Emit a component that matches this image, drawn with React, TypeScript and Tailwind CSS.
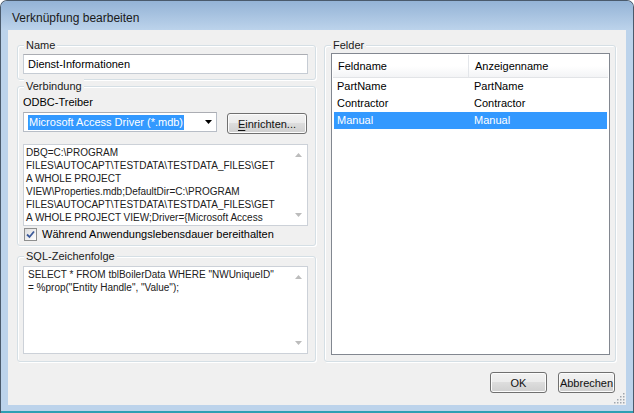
import type { ReactNode } from "react";

const connLines = [
  "DBQ=C:\\PROGRAM",
  "FILES\\AUTOCAPT\\TESTDATA\\TESTDATA_FILES\\GET",
  "A WHOLE PROJECT",
  "VIEW\\Properties.mdb;DefaultDir=C:\\PROGRAM",
  "FILES\\AUTOCAPT\\TESTDATA\\TESTDATA_FILES\\GET",
  "A WHOLE PROJECT VIEW;Driver={Microsoft Access",
];

const sqlLines = [
  'SELECT * FROM tblBoilerData WHERE "NWUniqueID"',
  '= %prop("Entity Handle", "Value");',
];

const rows = [
  { field: "PartName", display: "PartName" },
  { field: "Contractor", display: "Contractor" },
  { field: "Manual", display: "Manual", selected: true },
];

function Group({ label, className, children }: { label: string; className: string; children?: ReactNode }) {
  return (
    <div className={`relative rounded-[3px] border border-[#d5dfe5] shadow-[inset_1px_1px_0_#ffffff,1px_1px_0_#ffffff] ${className}`}>
      <span className="absolute -top-[8px] left-[6px] px-[2px] bg-[#f0f0f0] leading-[14px] text-[#1b1b1b] whitespace-nowrap">
        {label}
      </span>
      {children}
    </div>
  );
}

function Button({ children, className }: { children: ReactNode; className: string }) {
  return (
    <button className={`rounded-[3px] border border-[#707070] bg-[linear-gradient(#f2f2f2_0%,#ebebeb_50%,#dddddd_50%,#cfcfcf_100%)] shadow-[inset_0_0_0_1px_#fcfcfc] leading-[14px] text-[#111] whitespace-nowrap ${className}`}>
      {children}
    </button>
  );
}

function ScrollColumn() {
  return (
    <div className="w-[17px] shrink-0 flex flex-col justify-between items-center py-[8px]">
      <svg width="7" height="4" viewBox="0 0 7 4">
        <path d="M0 4 L3.5 0 L7 4 Z" fill="#bcbcbc" />
      </svg>
      <svg width="7" height="4" viewBox="0 0 7 4">
        <path d="M0 0 L3.5 4 L7 0 Z" fill="#bcbcbc" />
      </svg>
    </div>
  );
}

export default function App() {
  return (
    <div className="w-[634px] h-[413px] flex flex-col overflow-hidden rounded-t-[7px] border-x border-t border-[#4a5a6c] bg-[#bcd3eb] font-['Liberation_Sans',Arial,sans-serif] text-[11px] text-black">
      {/* title bar */}
      <div className="h-[29px] shrink-0 flex items-center pl-[11px] pt-[5px] bg-[linear-gradient(#94b3d6,#bcd3eb)] text-[12px] text-[#1a1a1a]">
        Verknüpfung bearbeiten
      </div>

      {/* client area */}
      <div className="relative flex-1 flex flex-col mx-[7px] bg-[#f0f0f0] pt-[15px] pl-[9px] pr-[10px]">
        <div className="flex gap-[8px] h-[317px]">
          {/* left column */}
          <div className="w-[299px] flex flex-col">
            <Group label="Name" className="h-[35px] pt-[8px] pl-[5px] pr-[7px]">
              <div className="h-[20px] border border-[#c6ccd4] border-t-[#abadb3] bg-white pl-[4px] leading-[18px]">
                Dienst-Informationen
              </div>
            </Group>

            <Group label="Verbindung" className="h-[160px] mt-[6px] pt-[8px] pl-[5px] pr-[7px]">
              <div className="leading-[14px]">ODBC-Treiber</div>
              <div className="flex items-start gap-[10px] mt-[3px]">
                <div className="w-[194px] h-[20px] flex items-center justify-between border border-[#b7bdc6] border-t-[#abadb3] bg-white pl-[4px] pr-[4px]">
                  <span className="bg-[#3399ff] text-white leading-[15px] px-[1px] whitespace-nowrap">
                    Microsoft Access Driver (*.mdb)
                  </span>
                  <svg width="7" height="4" viewBox="0 0 7 4">
                    <path d="M0 0 L3.5 4 L7 0 Z" fill="#000" />
                  </svg>
                </div>
                <Button className="w-[80px] h-[21px] mt-[1px]">
                  <span className="underline underline-offset-2">E</span>inrichten...
                </Button>
              </div>
              <div className="mt-[10px] h-[82px] flex border border-[#ccd1d8] bg-white">
                <div className="flex-1 pl-[2px] pt-[1px] text-[10px] leading-[13px] text-[#202020] overflow-hidden">
                  {connLines.map((l, i) => (
                    <div key={i} className="whitespace-nowrap">{l}</div>
                  ))}
                </div>
                <ScrollColumn />
              </div>
              <div className="mt-[1px] flex items-center gap-[5px] pl-[1px]">
                <div className="w-[13px] h-[13px] border border-[#8e8f8f] bg-[linear-gradient(135deg,#dcdcdc,#ffffff)] p-[1px] flex items-center justify-center">
                  <svg width="9" height="9" viewBox="0 0 9 9">
                    <path d="M1 4.5 L3.5 7 L8 1.5" stroke="#3c5a9a" strokeWidth="1.8" fill="none" />
                  </svg>
                </div>
                <span className="leading-[15px] whitespace-nowrap">Während Anwendungslebensdauer bereithalten</span>
              </div>
            </Group>

            <Group label="SQL-Zeichenfolge" className="h-[106px] mt-[10px] pt-[9px] pl-[5px] pr-[7px]">
              <div className="h-[88px] flex border border-[#ccd1d8] bg-white">
                <div className="flex-1 pl-[4px] pt-[1px] text-[10px] leading-[13px] text-[#202020] overflow-hidden">
                  {sqlLines.map((l, i) => (
                    <div key={i} className="whitespace-nowrap">{l}</div>
                  ))}
                </div>
                <ScrollColumn />
              </div>
            </Group>
          </div>

          {/* right column */}
          <Group label="Felder" className="flex-1 pt-[7px] pl-[6px] pr-[5px] pb-[6px] flex flex-col">
            <div className="flex-1 border border-[#828790] bg-white p-[1px]">
              <div className="flex h-[23px] bg-[linear-gradient(#ffffff,#ffffff_50%,#f3f4f6)] border-b border-[#e2e4e7]">
                <div className="w-[136px] pl-[5px] flex items-center border-r border-[#e3e6ea]">Feldname</div>
                <div className="flex-1 pl-[6px] flex items-center">Anzeigenname</div>
              </div>
              {rows.map((r) => (
                <div
                  key={r.field}
                  className={`flex h-[17px] mx-[1px] items-center ${r.selected ? "bg-[#3399ff] text-white" : ""}`}
                >
                  <div className="w-[140px] pl-[3px]">{r.field}</div>
                  <div className="flex-1">{r.display}</div>
                </div>
              ))}
            </div>
          </Group>
        </div>

        {/* buttons */}
        <div className="mt-[10px] flex justify-end gap-[11px] pr-[1px]">
          <Button className="w-[57px] h-[21px]">OK</Button>
          <Button className="w-[57px] h-[21px]">Abbrechen</Button>
        </div>

        {/* resize grip */}
        <svg className="absolute right-[1px] bottom-[1px]" width="11" height="11" viewBox="0 0 11 11">
          {[
            [9, 1], [9, 4], [9, 7], [6, 4], [6, 7], [3, 7], [9, 10], [6, 10], [3, 10], [0, 10],
          ].map(([x, y], i) => (
            <rect key={i} x={x} y={y - 1} width="1.5" height="1.5" fill="#a0a6ad" />
          ))}
        </svg>
      </div>

      {/* bottom frame */}
      <div className="h-[8px] shrink-0 border-b-2 border-[#2e9fb3]" />
    </div>
  );
}
